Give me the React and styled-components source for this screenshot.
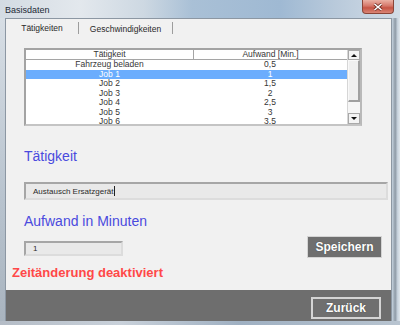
import React from 'react';
import styled, { createGlobalStyle } from 'styled-components';

const GlobalStyle = createGlobalStyle`
  html, body {
    margin: 0;
    padding: 0;
  }
  body {
    width: 400px;
    height: 325px;
    overflow: hidden;
    font-family: 'Liberation Sans', Arial, sans-serif;
  }
`;

const Window = styled.div`
  width: 400px;
  height: 325px;
  display: flex;
  flex-direction: column;
  background: linear-gradient(
    90deg,
    #d3dbe3 0%,
    #e3e8ed 20%,
    #cdd8e2 36%,
    #a9c0d6 48%,
    #9fb9d3 70%,
    #b9cadb 84%,
    #d2dce6 100%
  );
`;

const TitleBar = styled.div`
  height: 18px;
  display: flex;
  align-items: flex-start;
`;

const Title = styled.span`
  font-size: 9px;
  color: #1e2a36;
  padding: 5px 0 0 5px;
`;

const CloseButton = styled.div`
  margin-left: auto;
  margin-right: 6px;
  width: 32px;
  height: 14px;
  box-sizing: border-box;
  border: 1px solid #8a4538;
  border-top: none;
  border-radius: 0 0 4px 4px;
  background: linear-gradient(#eab1a4 0%, #d6786a 45%, #c65444 60%, #d98576 100%);
  display: flex;
  align-items: center;
  justify-content: center;
`;

const FrameRow = styled.div`
  height: 303px;
  display: flex;
`;

const SideFrame = styled.div`
  width: ${p => p.$w}px;
  flex-shrink: 0;
  background: ${p => p.$bg};
`;

const Client = styled.div`
  width: 387px;
  box-sizing: border-box;
  border: 1px solid #8c97a3;
  border-bottom: none;
  background: #f1f1f1;
  display: flex;
  flex-direction: column;
`;

const TabStrip = styled.div`
  height: 17px;
  display: flex;
  align-items: flex-end;
`;

const Tab = styled.div`
  width: ${p => p.$w}px;
  height: ${p => (p.$active ? 17 : 12)}px;
  margin-bottom: ${p => (p.$active ? 0 : 2)}px;
  box-sizing: border-box;
  border-left: ${p => (p.$active ? 'none' : '1px solid #9d9d9d')};
  border-right: ${p => (p.$active ? 'none' : '1px solid #9d9d9d')};
  font-size: 8.5px;
  color: #2a2a2a;
  display: flex;
  align-items: center;
  justify-content: center;
  padding-top: ${p => (p.$active ? 0 : 1)}px;
`;

const Page = styled.div`
  flex: 1;
  display: flex;
  flex-direction: column;
  padding: 0 3px 0 6px;
`;

const Indented = styled.div`
  padding-left: 12px;
  display: flex;
  flex-direction: column;
`;

const ListBox = styled.div`
  margin-top: 12px;
  width: 338px;
  height: 78px;
  box-sizing: border-box;
  border: 2px solid #a3a3a3;
  border-right-color: #b9b9b9;
  border-bottom-color: #c4c4c4;
  background: #fff;
  display: flex;
  overflow: hidden;
`;

const Table = styled.div`
  flex: 1;
  display: flex;
  flex-direction: column;
`;

const Row = styled.div`
  display: grid;
  grid-template-columns: 167px 1fr;
  height: ${p => (p.$header ? 9 : 9.5)}px;
  line-height: ${p => (p.$header ? 9 : 9.5)}px;
  font-size: 8.5px;
  text-align: center;
  color: ${p => (p.$selected ? '#ffffff' : '#363636')};
  background: ${p => (p.$selected ? '#6badfd' : 'transparent')};
  border-bottom: ${p => (p.$header ? '1px solid #a5a5a5' : 'none')};
  flex-shrink: 0;
`;

const Cell = styled.div`
  border-left: ${p => (p.$divider ? '1px solid #a5a5a5' : 'none')};
  white-space: nowrap;
`;

const ScrollBar = styled.div`
  width: 12px;
  display: flex;
  flex-direction: column;
  background: #f3f3f3;
  border-left: 1px solid #d6d6d6;
`;

const ScrollButton = styled.div`
  height: ${p => p.$h}px;
  box-sizing: border-box;
  border: 1px solid #a9a9a9;
  background: #f4f4f4;
  display: flex;
  align-items: center;
  justify-content: center;
`;

const Thumb = styled.div`
  height: 42px;
  box-sizing: border-box;
  border-top: 1px solid #f8f8f8;
  border-left: 1px solid #f8f8f8;
  border-right: 2px solid #a0a0a0;
  border-bottom: 2px solid #a0a0a0;
  background: #efefef;
`;

const Track = styled.div`
  flex: 1;
  background: #f6f6f6;
`;

const Arrow = styled.div`
  width: 0;
  height: 0;
  border-left: 3px solid transparent;
  border-right: 3px solid transparent;
  ${p => (p.$up ? 'border-bottom: 3px solid #111;' : 'border-top: 3px solid #111;')}
`;

const Label = styled.div`
  margin-top: ${p => p.$mt}px;
  font-size: 14px;
  line-height: 16px;
  color: #4a4ade;
`;

const TextBox = styled.div`
  width: ${p => p.$w}px;
  height: ${p => p.$h}px;
  margin-top: ${p => p.$mt}px;
  box-sizing: border-box;
  border: 2px solid #a6a6a6;
  border-right-color: #dcdcdc;
  border-bottom-color: #dcdcdc;
  background: #e9e9e9;
  padding-left: 7px;
  font-size: 8px;
  color: #2b2b2b;
  display: flex;
  align-items: center;
`;

const Caret = styled.span`
  display: inline-block;
  width: 1px;
  height: 10px;
  background: #222;
  margin-left: 1px;
`;

const InputRow = styled.div`
  margin-top: 7px;
  padding-right: 6px;
  display: flex;
  justify-content: space-between;
  align-items: flex-start;
`;

const DarkButton = styled.div`
  width: ${p => p.$w}px;
  height: ${p => p.$h}px;
  box-sizing: border-box;
  border: ${p => p.$bw}px solid #d4d4d4;
  background: #6f6f6f;
  color: #ffffff;
  font-weight: bold;
  font-size: 12px;
  display: flex;
  align-items: center;
  justify-content: center;
  text-shadow: 0 0 1px #3a3a3a;
`;

const ErrorText = styled.div`
  margin-top: 7px;
  font-size: 13px;
  line-height: 15px;
  font-weight: bold;
  color: #ff4848;
`;

const BottomBar = styled.div`
  margin-top: auto;
  height: 31px;
  background: #6e6e6e;
  display: flex;
  justify-content: flex-end;
  align-items: flex-start;
  padding: 7px 10px 0 0;
  box-sizing: border-box;
`;

const BottomFrame = styled.div`
  height: 4px;
  background: linear-gradient(90deg, #b4bcc6 0%, #c9d1da 30%, #9fb0c2 60%, #b8c4d0 100%);
`;

const rows = [
  ['Fahrzeug beladen', '0,5'],
  ['Job 1', '1'],
  ['Job 2', '1,5'],
  ['Job 3', '2'],
  ['Job 4', '2,5'],
  ['Job 5', '3'],
  ['Job 6', '3,5'],
];

export default function App() {
  return (
    <>
      <GlobalStyle />
      <Window>
        <TitleBar>
          <Title>Basisdaten</Title>
          <CloseButton>
            <svg width="10" height="8" viewBox="0 0 10 8">
              <path d="M1.5 1 L8.5 7 M8.5 1 L1.5 7" stroke="#6b2c22" strokeWidth="3" />
              <path d="M1.5 1 L8.5 7 M8.5 1 L1.5 7" stroke="#ffffff" strokeWidth="1.6" />
            </svg>
          </CloseButton>
        </TitleBar>
        <FrameRow>
          <SideFrame $w={5} $bg="linear-gradient(#d7dee5, #b8c3ce 60%, #a9b4bf)" />
          <Client>
            <TabStrip>
              <Tab $active $w={72}>Tätigkeiten</Tab>
              <Tab $w={95}>Geschwindigkeiten</Tab>
            </TabStrip>
            <Page>
              <Indented>
                <ListBox>
                  <Table>
                    <Row $header>
                      <Cell>Tätigkeit</Cell>
                      <Cell $divider>Aufwand [Min.]</Cell>
                    </Row>
                    {rows.map(([name, value], i) => (
                      <Row key={name} $selected={i === 1}>
                        <Cell>{name}</Cell>
                        <Cell>{value}</Cell>
                      </Row>
                    ))}
                  </Table>
                  <ScrollBar>
                    <ScrollButton $h={10}>
                      <Arrow $up />
                    </ScrollButton>
                    <Thumb />
                    <Track />
                    <ScrollButton $h={11}>
                      <Arrow />
                    </ScrollButton>
                  </ScrollBar>
                </ListBox>
                <Label $mt={22}>Tätigkeit</Label>
                <TextBox $w={364} $h={18} $mt={18}>
                  Austausch Ersatzgerät
                  <Caret />
                </TextBox>
                <Label $mt={13}>Aufwand in Minuten</Label>
                <InputRow>
                  <TextBox $w={99} $h={15} $mt={5}>1</TextBox>
                  <DarkButton $w={75} $h={22} $bw={1}>Speichern</DarkButton>
                </InputRow>
              </Indented>
              <ErrorText>Zeitänderung deaktiviert</ErrorText>
            </Page>
            <BottomBar>
              <DarkButton $w={70} $h={22} $bw={2}>Zurück</DarkButton>
            </BottomBar>
          </Client>
          <SideFrame $w={8} $bg="linear-gradient(90deg, #c5d2de, #8e9aa6 40%, #c8d3de 70%, #dfe6ec)" />
        </FrameRow>
        <BottomFrame />
      </Window>
    </>
  );
}
